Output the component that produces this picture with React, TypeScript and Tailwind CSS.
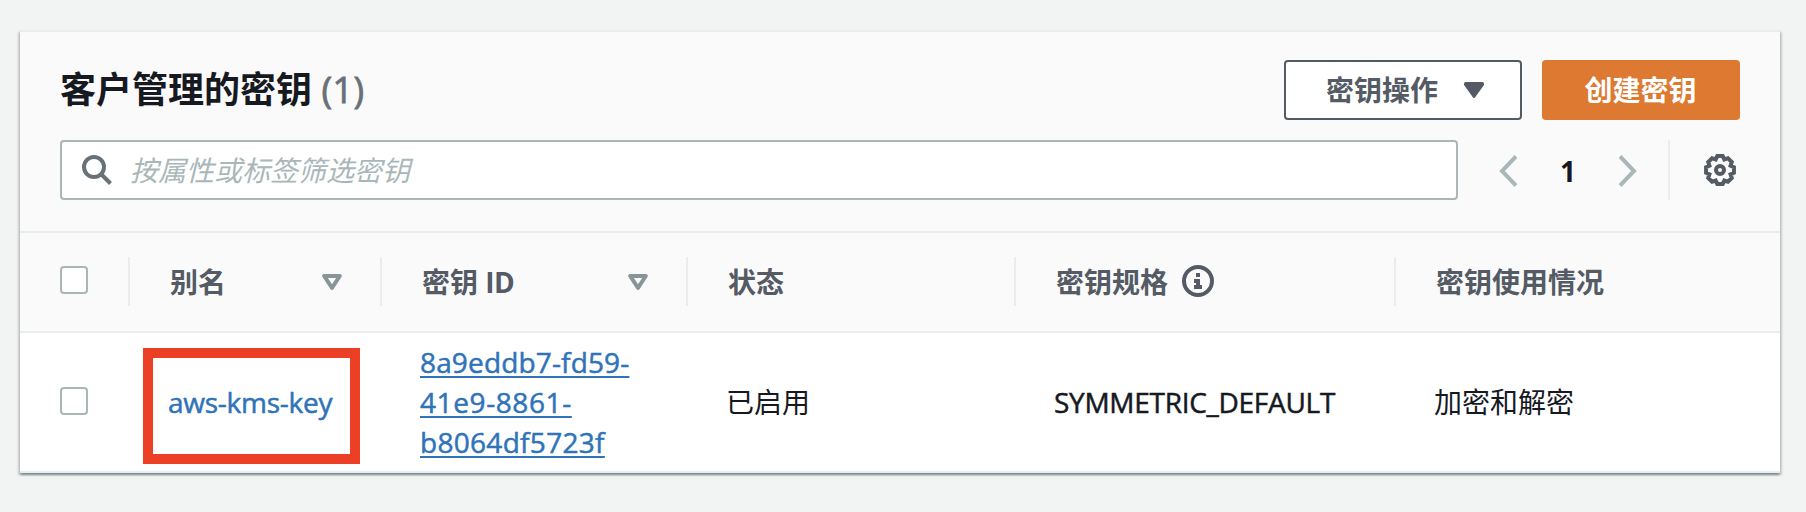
import type { ReactNode } from "react";

const columns = "grid grid-cols-[110px_252px_306px_328px_380px_384px]";

function Checkbox() {
  return (
    <span
      role="checkbox"
      aria-checked="false"
      className="block h-7 w-7 rounded-[4px] border-2 border-[#aab7b8] bg-white"
    />
  );
}

function SortCaret() {
  return (
    <svg viewBox="0 0 20 16" className="h-4 w-5" fill="none" stroke="#879596" strokeWidth="4" strokeLinejoin="round">
      <path d="M2.2 2h15.6L10 13.8z" />
    </svg>
  );
}

function InfoIcon() {
  return (
    <svg viewBox="0 0 32 32" className="mb-0.5 h-8 w-8" fill="none">
      <circle cx="16" cy="16" r="14" stroke="#545b64" strokeWidth="4" />
      <path d="M14 8h4v4h-4zM12 14h6v6h2v4h-8v-4h2v-2h-2z" fill="#545b64" />
    </svg>
  );
}

function GearIcon() {
  const teeth = Array.from({ length: 8 }, (_, i) => {
    const at = (deg: number, r: number) => {
      const a = ((i * 45 + deg) * Math.PI) / 180;
      return `${(16 + r * Math.cos(a)).toFixed(2)} ${(16 + r * Math.sin(a)).toFixed(2)}`;
    };
    return `${at(-11, 14.2)} L${at(11, 14.2)} L${at(22.5, 11.4)}`;
  });
  return (
    <svg viewBox="0 0 32 32" className="h-8 w-8" fill="none" stroke="#545b64" strokeWidth="4">
      <path d={`M${teeth.join(" L")}z`} />
      <circle cx="16" cy="16" r="4" strokeWidth="4" />
    </svg>
  );
}

function HeaderCell({ children, last = false }: { children: ReactNode; last?: boolean }) {
  return (
    <div
      className={`flex h-[49px] items-center border-[#eaeded] pl-10 pr-[38px] font-bold text-[#545b64] ${
        last ? "" : "border-r-2"
      }`}
    >
      {children}
    </div>
  );
}

export default function App() {
  return (
    <div className="h-[512px] w-[1806px] overflow-hidden bg-[#f2f3f3] px-5 pt-[30px] font-['Open_Sans','Noto_Sans_CJK_SC',sans-serif] text-[28px] leading-10 text-[#16191f]">
      <section className="h-[443px] w-[1760px] border-t-2 border-[#eaeded] bg-[#fafafa] shadow-[0_2px_2px_0_rgba(0,28,36,0.3),2px_2px_2px_0_rgba(0,28,36,0.15),-2px_2px_2px_0_rgba(0,28,36,0.15)]">
        <div className="h-[201px] border-b-2 border-[#eaeded] px-10 pt-7">
          <div className="flex h-[60px] items-center justify-between">
            <h1 className="text-[36px] font-bold leading-[60px]">
              客户管理的密钥{" "}
              <span className="font-normal tracking-[0.5px] text-[#687078] [-webkit-text-stroke:0.8px]">(1)</span>
            </h1>
            <div className="flex gap-5 font-bold">
              <button className="flex h-[60px] w-[238px] items-center rounded-[4px] border-2 border-[#545b64] bg-white pl-10 text-[#545b64]">
                密钥操作
                <svg viewBox="0 0 20 16" className="ml-[26px] h-4 w-5" fill="#545b64">
                  <path d="M1.5 0h17Q20 0 20 1.5V3L11 15.5Q10 16.5 9 15.5L0 3V1.5Q0 0 1.5 0z" />
                </svg>
              </button>
              <button className="h-[60px] w-[198px] rounded-[4px] bg-[#dd7931] pr-px text-white">创建密钥</button>
            </div>
          </div>
          <div className="mt-5 flex h-[60px] items-center">
            <div className="flex h-[60px] w-[1398px] items-center rounded-[4px] border-2 border-[#aab7b8] bg-white pl-5">
              <svg viewBox="0 0 30 30" className="h-[30px] w-[30px]" fill="none" stroke="#687078" strokeWidth="4">
                <circle cx="12" cy="12" r="10" />
                <path d="M19 19l9.5 9.5" />
              </svg>
              <span className="ml-[18px] italic text-[#aab7b8]">按属性或标签筛选密钥</span>
            </div>
            <svg viewBox="0 0 18 32" className="ml-[41px] mt-0.5 h-8 w-[18px]" fill="none" stroke="#aab7b8" strokeWidth="4">
              <path d="M17 1.5L3 16l14 14.5" />
            </svg>
            <span className="w-[102px] pt-0.5 text-center text-[28px] font-bold">1</span>
            <svg viewBox="0 0 18 32" className="mt-0.5 h-8 w-[18px]" fill="none" stroke="#aab7b8" strokeWidth="4">
              <path d="M1 1.5L15 16L1 30.5" />
            </svg>
            <div className="ml-[31px] h-[60px] w-0.5 bg-[#eaeded]" />
            <div className="ml-[34px]">
              <GearIcon />
            </div>
          </div>
        </div>

        <div className={`${columns} h-[100px] border-b-2 border-[#eaeded] pt-6`}>
          <div className="flex h-[49px] items-center border-r-2 border-[#eaeded] pb-[3px] pl-10">
            <Checkbox />
          </div>
          <HeaderCell>
            <span className="flex-1">别名</span>
            <SortCaret />
          </HeaderCell>
          <HeaderCell>
            <span className="flex-1">
              密钥 <span className="tracking-[-0.5px]">ID</span>
            </span>
            <SortCaret />
          </HeaderCell>
          <HeaderCell>状态</HeaderCell>
          <HeaderCell>
            <span className="mr-3.5">密钥规格</span>
            <InfoIcon />
          </HeaderCell>
          <HeaderCell last>密钥使用情况</HeaderCell>
        </div>

        <div className={`${columns} h-[140px] items-center border-b-2 border-[#eaeded] bg-white`}>
          <div className="pb-0.5 pl-10">
            <Checkbox />
          </div>
          <div className="pl-[13px]">
            <div className="mt-2 flex h-[116px] w-[217px] items-center border-10 border-[#eb4025] pb-2 pl-[15px] tracking-[-0.25px] text-[#2f73b9] [-webkit-text-stroke:0.5px]">
              aws-kms-key
            </div>
          </div>
          <div className="pl-[38px] text-[#2f73b9] underline decoration-2 underline-offset-[3px] [-webkit-text-stroke:0.5px]">
            <span className="block w-fit tracking-[0.15px]">8a9eddb7-fd59-</span>
            <span className="block w-fit tracking-[0.6px]">41e9-8861-</span>
            <span className="block w-fit tracking-[0.3px]">b8064df5723f</span>
          </div>
          <div className="pl-[38px]">已启用</div>
          <div className="pl-[38px] tracking-[-0.28px] [-webkit-text-stroke:0.5px]">SYMMETRIC_DEFAULT</div>
          <div className="pl-[38px]">加密和解密</div>
        </div>
      </section>
    </div>
  );
}
